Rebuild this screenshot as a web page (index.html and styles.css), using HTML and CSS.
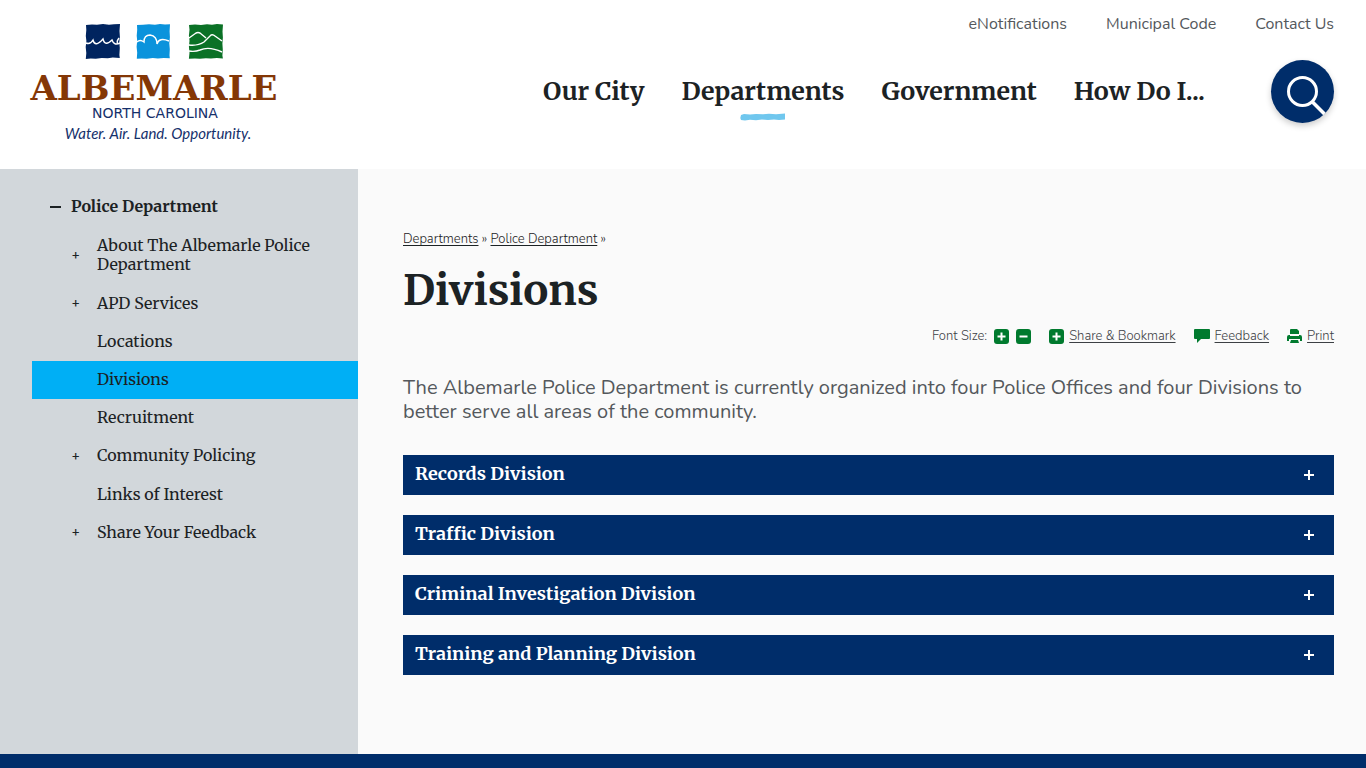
FILE: index.html
```html
<!DOCTYPE html>
<html lang="en">
<head>
<meta charset="utf-8">
<meta name="viewport" content="width=device-width, initial-scale=1">
<title>Divisions | Albemarle, NC</title>
<link rel="stylesheet" href="styles.css">
</head>
<body>
<header class="site-header">
  <a class="logo" href="#">
    <svg width="246" height="122" viewBox="0 0 246 122" role="img" aria-label="Albemarle North Carolina">
      <path fill="#00245f" d="M54 1l6-.6 5 .4 6-.8 6 .7 5-.5 6-.2-.5 7 .4 6-.6 5 .5 6-.4 7 .4 3-7-.4-5 .7-6-.2-6 .6-5-.2-5 .5.5-6-.6-6 .7-6-.6-5 .5-6z"/>
      <path fill="none" stroke="#fff" stroke-width="1.400" d="M54 19q4 2 7-3 2 8 10-1 2 8 9 1 2 6 8 3M87 14q-3 4-1 6"/>
      <path fill="#0a93dc" d="M105 1l6-.3 6-.5 6 .6 5-.7 5 .5 5-.4-.4 7 .3 6-.6 6 .5 6-.3 6 .3 3-6-.2-6 .5-5-.4-6 .6-5-.2-5 .3.4-6-.6-6 .6-6-.5-5 .5-6z"/>
      <path fill="none" stroke="#fff" stroke-width="1.400" d="M105 18q3-3 7 0 0-7 6-7 7 1 7 9 2-7 12-3"/>
      <path fill="#0b7126" d="M157 1l6-.4 6 .3 6-.7 5 .6 5-.7 6 .3-.5 7 .4 6-.5 6 .4 6-.4 6 .5 3-6-.3-6 .5-5-.3-6 .5-5-.2-6 .2.6-6-.6-6 .6-6-.6-5 .6-6z"/>
      <path fill="none" stroke="#fff" stroke-width="1.400" d="M157 14l7-5q2-1 4 0l6 5M157 21q9 1 15-3l7-7q2-1 4 1l7 5M157 27q6 1 11-1 9-4 22 2"/>
      <text class="logo-name" x="122" y="76" text-anchor="middle">ALBEMARLE</text>
      <text class="logo-state" x="123" y="94" text-anchor="middle">NORTH CAROLINA</text>
      <text class="logo-motto" x="126" y="115" text-anchor="middle">Water. Air. Land. Opportunity.</text>
    </svg>
  </a>
  <div class="header-nav">
    <nav class="top-links" aria-label="Quick links">
      <a href="#">eNotifications</a>
      <a href="#">Municipal Code</a>
      <a href="#">Contact Us</a>
    </nav>
    <div class="main-row">
      <nav class="main-nav" aria-label="Main">
        <a href="#">Our City</a>
        <a class="active" href="#">Departments
          <svg class="brush" width="46" height="8" viewBox="0 0 46 8" aria-hidden="true"><path fill="#70c7ee" d="M1 2l3-1 6 .4 6-.5 7 .4 6-.5 7 .4 9-.6v6l-6 .3-5-.5-6 .6-6-.4-6 .6-6-.4-5 .6L1 7 .3 5z"/></svg>
        </a>
        <a href="#">Government</a>
        <a href="#">How Do I...</a>
      </nav>
      <button class="search" type="button" aria-label="Search">
        <svg width="63" height="63" viewBox="0 0 63 63" fill="none" stroke="#fff" aria-hidden="true"><circle cx="31.500" cy="31.500" r="14" stroke-width="3"/><path stroke-width="3.500" d="M41.500 42l12 12"/></svg>
      </button>
    </div>
  </div>
</header>
<div class="page">
  <aside class="sidebar">
    <nav aria-label="Police Department">
      <a class="side-title" href="#"><span class="minus"></span>Police Department</a>
      <ul class="side-list">
        <li><button type="button" aria-label="Expand">+</button><a href="#">About The Albemarle Police Department</a></li>
        <li><button type="button" aria-label="Expand">+</button><a href="#">APD Services</a></li>
        <li><a href="#">Locations</a></li>
        <li class="current"><a href="#" aria-current="page">Divisions</a></li>
        <li><a href="#">Recruitment</a></li>
        <li><button type="button" aria-label="Expand">+</button><a href="#">Community Policing</a></li>
        <li><a href="#">Links of Interest</a></li>
        <li><button type="button" aria-label="Expand">+</button><a href="#">Share Your Feedback</a></li>
      </ul>
    </nav>
  </aside>
  <main class="content">
    <div class="crumbs"><a href="#">Departments</a> » <a href="#">Police Department</a> »</div>
    <h1>Divisions</h1>
    <div class="tools">
      <div class="font-size">
        <span>Font Size:</span>
        <button type="button" aria-label="Increase font size"><svg width="15" height="15" viewBox="0 0 15 15"><rect width="15" height="15" rx="3" fill="#007a2e"/><path stroke="#fff" stroke-width="2" d="M3.500 7.500h8M7.500 3.500v8"/></svg></button>
        <button type="button" aria-label="Decrease font size"><svg width="15" height="15" viewBox="0 0 15 15"><rect width="15" height="15" rx="3" fill="#007a2e"/><path stroke="#fff" stroke-width="2" d="M3.500 7.500h8"/></svg></button>
      </div>
      <a href="#"><svg width="15" height="15" viewBox="0 0 15 15"><rect width="15" height="15" rx="3" fill="#007a2e"/><path stroke="#fff" stroke-width="2" d="M3.500 7.500h8M7.500 3.500v8"/></svg><span>Share &amp; Bookmark</span></a>
      <a href="#"><svg width="16" height="15" viewBox="0 0 16 15"><path fill="#007a2e" d="M1 0h14q1 0 1 1v8q0 1-1 1H7l-4 4V10H1q-1 0-1-1V1q0-1 1-1z"/></svg><span>Feedback</span></a>
      <a href="#"><svg width="15" height="15" viewBox="0 0 15 15"><path fill="#007a2e" d="M4 0h6l2 2v3H3V1q0-1 1-1zM0 8q0-2 2-2h1v1h9V6h1q2 0 2 2v4h-2v-2H2v2H0zM4 11h7l1 3H3z"/></svg><span>Print</span></a>
    </div>
    <p class="intro">The Albemarle Police Department is currently organized into four Police Offices and four Divisions to better serve all areas of the community.</p>
    <div class="accordion">
      <h2><button type="button" aria-expanded="false">Records Division<span class="plus"></span></button></h2>
      <h2><button type="button" aria-expanded="false">Traffic Division<span class="plus"></span></button></h2>
      <h2><button type="button" aria-expanded="false">Criminal Investigation Division<span class="plus"></span></button></h2>
      <h2><button type="button" aria-expanded="false">Training and Planning Division<span class="plus"></span></button></h2>
    </div>
  </main>
</div>
<footer class="site-footer"></footer>
</body>
</html>
```
FILE: styles.css
```css
:root {
  --serif: Merriweather, "DejaVu Serif Condensed", "DejaVu Serif", serif;
  --sans: Nunito, Lato, sans-serif;
  --navy: #002d6a;
  --ink: #1c2224;
}
* { box-sizing: border-box; }
body {
  margin: 0;
  min-height: 100vh;
  display: flex;
  flex-direction: column;
  background: #fafafa;
  color: #54585c;
  font-family: var(--sans);
  font-weight: 400;
}
a { color: inherit; text-decoration: none; }
button { font: inherit; color: inherit; background: none; border: 0; padding: 0; cursor: pointer; }
svg { display: block; flex: none; }

.site-header {
  display: flex;
  justify-content: space-between;
  background: #fff;
  padding: 14px 32px 23px;
}
.logo { padding-top: 10px; }
.logo svg { overflow: visible; }
.logo-name { font: bold 34px "DejaVu Serif", serif; fill: #843706; }
.logo-state { font: 14px "DejaVu Sans", sans-serif; fill: #15306b; }
.logo-motto { font: italic 15px Lato, sans-serif; fill: #15306b; }

.header-nav { display: flex; flex-direction: column; align-items: flex-end; }
.top-links { display: flex; gap: 39px; font-size: 16px; line-height: 20px; }
.main-row { display: flex; align-items: center; gap: 66px; padding-top: 26px; }
.main-nav {
  display: flex;
  gap: 37px;
  padding-bottom: 2px;
  font: bold 25px/30px var(--serif);
  color: var(--ink);
}
.active { position: relative; }
.brush { position: absolute; left: 50%; top: 100%; margin-left: -23px; margin-top: 7px; }
.search {
  width: 63px;
  height: 63px;
  border-radius: 50%;
  background: var(--navy);
  box-shadow: 0 3px 6px rgba(0, 0, 0, .2);
}

.page { flex: 1; display: flex; }
.sidebar {
  flex: 0 0 358px;
  background: #d2d7db;
  padding: 20px 0 32px 32px;
  font: 16px/1.2 var(--serif);
  color: var(--ink);
}
.side-title {
  display: flex;
  align-items: center;
  gap: 10px;
  padding: 8px 18px 11px;
  font-weight: bold;
}
.minus { width: 11px; height: 2px; background: var(--ink); }
.side-list { list-style: none; margin: 0; padding: 0; }
.side-list li { display: grid; grid-template-columns: 24px 1fr; padding-left: 41px; padding-right: 32px; align-items: center; }
.side-list li a { grid-column: 2; padding: 9px 0 10px; }
.side-list button { width: 8px; margin-left: -2px; font-size: 14px; line-height: 19px; }
.side-list .current { background: #00aff5; }

.content { flex: 1; min-width: 0; padding: 61px 32px 79px 45px; }
.crumbs { font-size: 13px; font-weight: 300; line-height: 18px; color: var(--ink); }
.crumbs a, .tools a span { text-decoration: underline; text-underline-offset: 2px; }
h1 { margin: 15px 0 0; font: bold 42px/54px var(--serif); color: var(--ink); }
.tools {
  display: flex;
  justify-content: flex-end;
  gap: 18px;
  margin-top: 10px;
  font-size: 13px;
  font-weight: 300;
  line-height: 18px;
  color: #3c4044;
}
.tools a, .font-size { display: flex; align-items: center; gap: 5px; }
.font-size { gap: 7px; }
.intro { margin: 31px 0; font-size: 20px; line-height: 24px; }
.accordion { display: grid; gap: 20px; }
.accordion h2 { margin: 0; font: bold 18px/24px var(--serif); }
.accordion button {
  display: flex;
  align-items: center;
  justify-content: space-between;
  width: 100%;
  padding: 7px 20px 9px 12px;
  background: var(--navy);
  color: #fff;
  text-align: left;
}
.plus {
  width: 10px;
  height: 10px;
  margin-top: 2px;
  background:
    linear-gradient(#fff, #fff) center / 10px 2px no-repeat,
    linear-gradient(#fff, #fff) center / 2px 10px no-repeat;
}
.site-footer { min-height: 14px; background: var(--navy); }
```
